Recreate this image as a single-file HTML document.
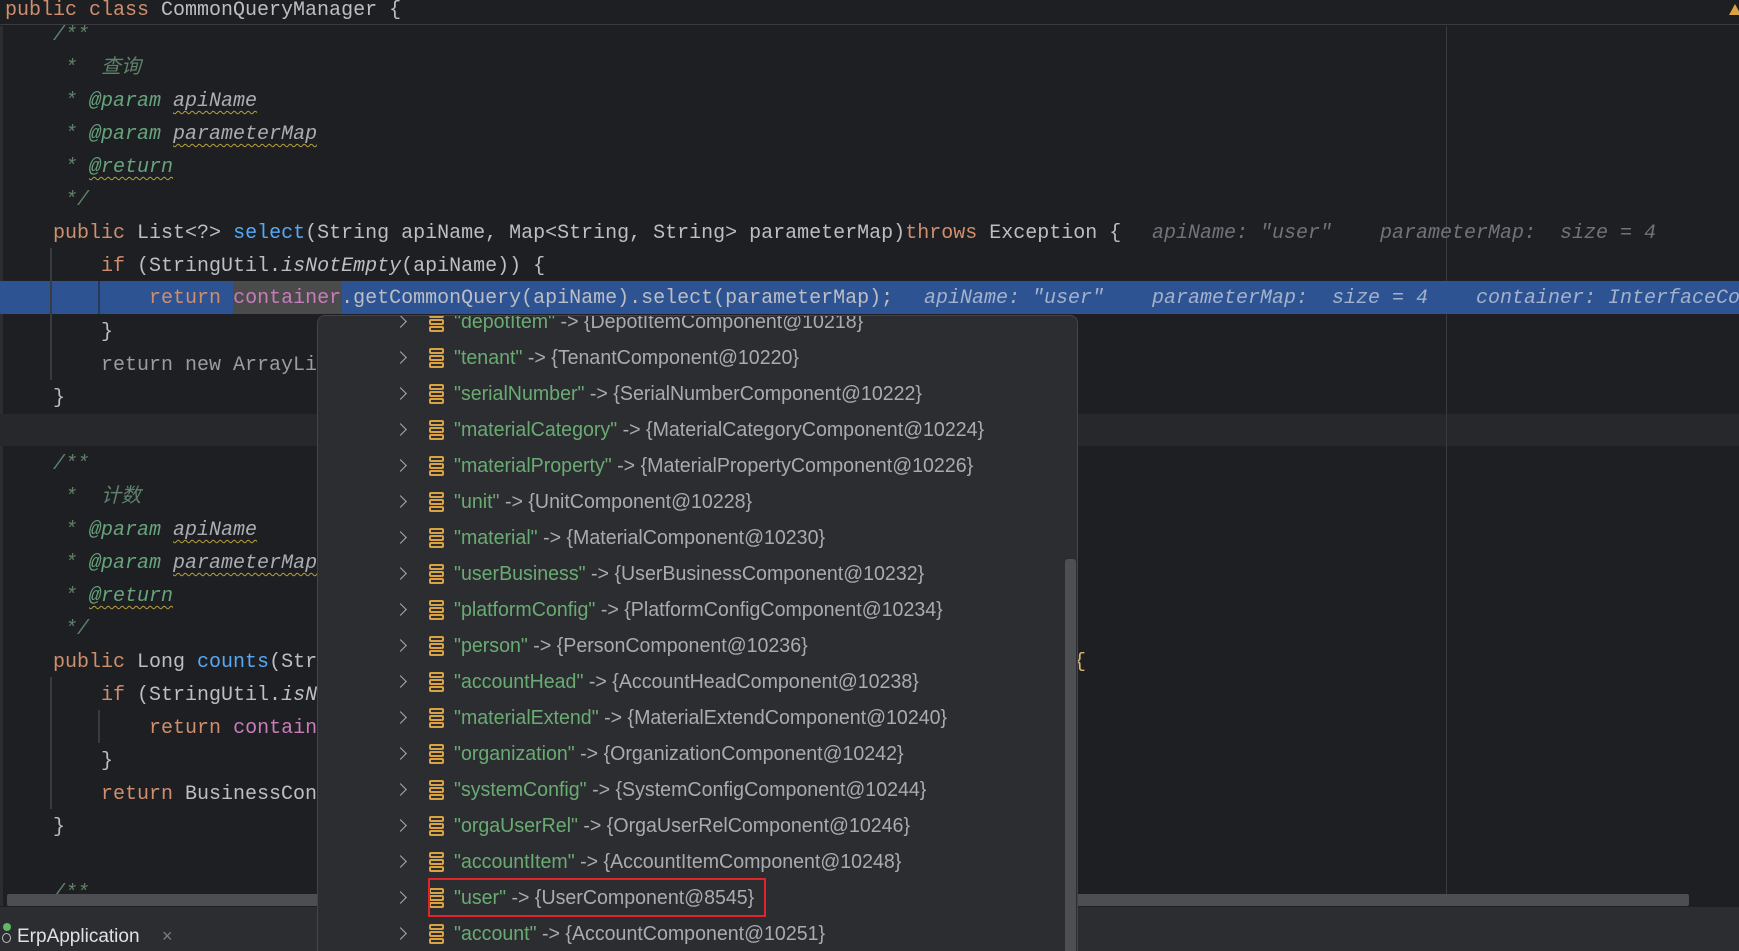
<!DOCTYPE html>
<html style="overflow:hidden;height:951px"><head><meta charset="utf-8"><style>
*{margin:0;padding:0;box-sizing:border-box}
body{width:1739px;height:951px;background:#1e1f22;overflow:hidden;position:relative;font-family:"Liberation Mono","Noto Sans CJK SC",monospace;font-size:20px;color:#bcbec4}
.l{position:absolute;left:5px;height:33px;line-height:33px;white-space:pre}
.k{color:#cf8e6d}.m{color:#56a8f5}.c{color:#7a7e85;font-style:italic}.dc{color:#5f826b;font-style:italic}
.tg{color:#67a37c;font-style:italic;text-decoration:underline wavy #b8a33a;text-decoration-thickness:1px;text-underline-offset:4px}
.pn{color:#abadb3;font-style:italic;text-decoration:underline wavy #b8a33a;text-decoration-thickness:1px;text-underline-offset:4px}
.tg2{color:#67a37c;font-style:italic}
.it{font-style:italic}.pu{color:#c77dbb}
.h{position:absolute;height:33px;line-height:33px;white-space:pre;font-style:italic;color:#6f737a}
.pop{position:absolute;left:317px;top:315px;width:761px;height:636px;background:#2b2d30;border:1px solid #43454a;border-bottom:none;border-radius:8px 8px 0 0;overflow:hidden}
.r{position:absolute;left:0;height:36px;line-height:36px;white-space:pre;font-family:"Liberation Sans","Noto Sans CJK SC",sans-serif;font-size:20px}
.r .t{position:absolute;left:136px;top:0;color:#a9abb0;transform:scaleX(0.98);transform-origin:left center}
.r .g{color:#6aab73}
.ch{position:absolute;left:78px;top:13px;width:9px;height:9px;border-right:1.6px solid #a9abb0;border-top:1.6px solid #a9abb0;transform:rotate(45deg)}
.ic{position:absolute;left:111px;top:8px;width:15px;height:20px}
.ic i{display:block;height:6px;border:2px solid #d9a343;border-radius:2px;margin-bottom:1px}
</style></head><body>
<div style="position:absolute;left:0;top:0;width:1739px;height:25px;border-bottom:1px solid #393b40;background:#1e1f22"></div>
<div class="l" style="top:-6px"><span class="k">public class</span> CommonQueryManager {</div>
<div style="position:absolute;left:1729px;top:4px;width:0;height:0;border-left:6px solid transparent;border-right:6px solid transparent;border-bottom:11px solid #d9a343"></div>
<div style="position:absolute;left:0;top:26px;width:3px;height:880px;background:#2b2d30"></div>
<div style="position:absolute;left:0;top:414px;width:1739px;height:32px;background:#26282c"></div>
<div style="position:absolute;left:1446px;top:26px;width:1px;height:880px;background:#393b40"></div>
<div style="position:absolute;left:0;top:281px;width:1739px;height:33px;background:#2d5392"></div>
<div style="position:absolute;left:233px;top:281px;width:109px;height:33px;background:#4b4b4b"></div>
<div style="position:absolute;left:50px;top:248px;width:2px;height:132px;background:#393b40"></div>
<div style="position:absolute;left:98px;top:281px;width:2px;height:33px;background:#1e1f22;opacity:.5"></div>
<div style="position:absolute;left:50px;top:677px;width:2px;height:132px;background:#393b40"></div>
<div style="position:absolute;left:98px;top:710px;width:2px;height:33px;background:#393b40"></div>

<div class="l dc" style="top:19px">    /**</div>
<div class="l dc" style="top:52px">     *  查询</div>
<div class="l dc" style="top:85px">     * <span class="tg2">@param</span> <span class="pn">apiName</span></div>
<div class="l dc" style="top:118px">     * <span class="tg2">@param</span> <span class="pn">parameterMap</span></div>
<div class="l dc" style="top:151px">     * <span class="tg">@return</span></div>
<div class="l dc" style="top:184px">     */</div>
<div class="l" style="top:217px">    <span class="k">public</span> List&lt;?&gt; <span class="m">select</span>(String apiName, Map&lt;String, String&gt; parameterMap)<span class="k">throws</span> Exception {</div>
<div class="h" style="left:1152px;top:217px">apiName: "user"</div>
<div class="h" style="left:1380px;top:217px">parameterMap:  size = 4</div>
<div class="l" style="top:250px">        <span class="k">if</span> (StringUtil.<span class="it">isNotEmpty</span>(apiName)) {</div>
<div class="l" style="top:282px">            <span class="k">return</span> <span class="pu">container</span>.getCommonQuery(apiName).select(parameterMap);</div>
<div class="h" style="left:924px;top:282px;color:#a3b1cc">apiName: "user"</div>
<div class="h" style="left:1152px;top:282px;color:#a3b1cc">parameterMap:  size = 4</div>
<div class="h" style="left:1476px;top:282px;color:#a3b1cc">container: InterfaceCo</div>
<div class="l" style="top:316px">        }</div>
<div class="l" style="top:349px;color:#9a9ca3">        return new ArrayLi</div>
<div class="l" style="top:382px">    }</div>

<div class="l dc" style="top:448px">    /**</div>
<div class="l dc" style="top:481px">     *  计数</div>
<div class="l dc" style="top:514px">     * <span class="tg2">@param</span> <span class="pn">apiName</span></div>
<div class="l dc" style="top:547px">     * <span class="tg2">@param</span> <span class="pn">parameterMap</span></div>
<div class="l dc" style="top:580px">     * <span class="tg">@return</span></div>
<div class="l dc" style="top:613px">     */</div>
<div class="l" style="top:646px">    <span class="k">public</span> Long <span class="m">counts</span>(Str</div>
<div class="l" style="top:679px">        <span class="k">if</span> (StringUtil.<span class="it">isN</span></div>
<div class="l" style="top:712px">            <span class="k">return</span> <span class="pu">contain</span></div>
<div class="l" style="top:745px">        }</div>
<div class="l" style="top:778px">        <span class="k">return</span> BusinessCon</div>
<div class="l" style="top:811px">    }</div>
<div class="l" style="left:1074px;top:646px;color:#d5b778">{</div>
<div class="l dc" style="top:877px">    /**</div>
<div style="position:absolute;left:7px;top:894px;width:1682px;height:12px;background:#4c4e52;border-radius:2px"></div>
<div style="position:absolute;left:0;top:907px;width:1739px;height:44px;background:#2b2d30"></div>
<div style="position:absolute;left:3px;top:923px;width:8px;height:8px;border-radius:50%;background:#5fb865"></div>
<div style="position:absolute;left:2px;top:933px;width:9px;height:10px;border:1.5px solid #bcbec4;border-radius:50%"></div>
<div style="position:absolute;left:17px;top:926px;font-family:'Liberation Sans',sans-serif;font-size:19px;color:#dfe1e5">ErpApplication</div>
<div style="position:absolute;left:162px;top:926px;font-family:'Liberation Sans',sans-serif;font-size:18px;color:#7a7e85">×</div>

<div class="pop">
<div style="position:absolute;left:747px;top:243px;width:11px;height:420px;background:#4d4f52;border-radius:3px"></div>
<div class="r" style="top:-12px;width:700px"><span class="ch"></span><span class="ic"><i></i><i></i><i></i></span><span class="t"><span class="g">"depotItem"</span> -&gt; {DepotItemComponent@10218}</span></div>
<div class="r" style="top:24px;width:700px"><span class="ch"></span><span class="ic"><i></i><i></i><i></i></span><span class="t"><span class="g">"tenant"</span> -&gt; {TenantComponent@10220}</span></div>
<div class="r" style="top:60px;width:700px"><span class="ch"></span><span class="ic"><i></i><i></i><i></i></span><span class="t"><span class="g">"serialNumber"</span> -&gt; {SerialNumberComponent@10222}</span></div>
<div class="r" style="top:96px;width:700px"><span class="ch"></span><span class="ic"><i></i><i></i><i></i></span><span class="t"><span class="g">"materialCategory"</span> -&gt; {MaterialCategoryComponent@10224}</span></div>
<div class="r" style="top:132px;width:700px"><span class="ch"></span><span class="ic"><i></i><i></i><i></i></span><span class="t"><span class="g">"materialProperty"</span> -&gt; {MaterialPropertyComponent@10226}</span></div>
<div class="r" style="top:168px;width:700px"><span class="ch"></span><span class="ic"><i></i><i></i><i></i></span><span class="t"><span class="g">"unit"</span> -&gt; {UnitComponent@10228}</span></div>
<div class="r" style="top:204px;width:700px"><span class="ch"></span><span class="ic"><i></i><i></i><i></i></span><span class="t"><span class="g">"material"</span> -&gt; {MaterialComponent@10230}</span></div>
<div class="r" style="top:240px;width:700px"><span class="ch"></span><span class="ic"><i></i><i></i><i></i></span><span class="t"><span class="g">"userBusiness"</span> -&gt; {UserBusinessComponent@10232}</span></div>
<div class="r" style="top:276px;width:700px"><span class="ch"></span><span class="ic"><i></i><i></i><i></i></span><span class="t"><span class="g">"platformConfig"</span> -&gt; {PlatformConfigComponent@10234}</span></div>
<div class="r" style="top:312px;width:700px"><span class="ch"></span><span class="ic"><i></i><i></i><i></i></span><span class="t"><span class="g">"person"</span> -&gt; {PersonComponent@10236}</span></div>
<div class="r" style="top:348px;width:700px"><span class="ch"></span><span class="ic"><i></i><i></i><i></i></span><span class="t"><span class="g">"accountHead"</span> -&gt; {AccountHeadComponent@10238}</span></div>
<div class="r" style="top:384px;width:700px"><span class="ch"></span><span class="ic"><i></i><i></i><i></i></span><span class="t"><span class="g">"materialExtend"</span> -&gt; {MaterialExtendComponent@10240}</span></div>
<div class="r" style="top:420px;width:700px"><span class="ch"></span><span class="ic"><i></i><i></i><i></i></span><span class="t"><span class="g">"organization"</span> -&gt; {OrganizationComponent@10242}</span></div>
<div class="r" style="top:456px;width:700px"><span class="ch"></span><span class="ic"><i></i><i></i><i></i></span><span class="t"><span class="g">"systemConfig"</span> -&gt; {SystemConfigComponent@10244}</span></div>
<div class="r" style="top:492px;width:700px"><span class="ch"></span><span class="ic"><i></i><i></i><i></i></span><span class="t"><span class="g">"orgaUserRel"</span> -&gt; {OrgaUserRelComponent@10246}</span></div>
<div class="r" style="top:528px;width:700px"><span class="ch"></span><span class="ic"><i></i><i></i><i></i></span><span class="t"><span class="g">"accountItem"</span> -&gt; {AccountItemComponent@10248}</span></div>
<div class="r" style="top:564px;width:700px"><span class="ch"></span><span class="ic"><i></i><i></i><i></i></span><span class="t"><span class="g">"user"</span> -&gt; {UserComponent@8545}</span></div>
<div class="r" style="top:600px;width:700px"><span class="ch"></span><span class="ic"><i></i><i></i><i></i></span><span class="t"><span class="g">"account"</span> -&gt; {AccountComponent@10251}</span></div>
<div style="position:absolute;left:110px;top:562px;width:338px;height:39px;border:2px solid #e0242b"></div>
</div>
</body></html>
